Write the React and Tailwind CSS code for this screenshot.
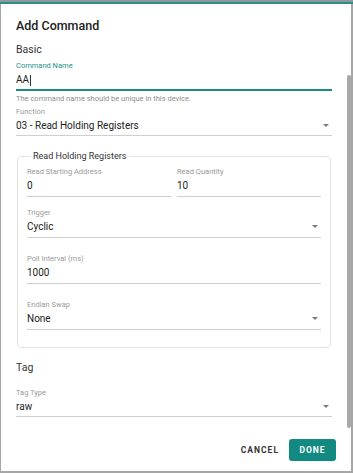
import React from "react";

const Arrow = () => (
  <svg width="6" height="3" viewBox="0 0 6 3" className="shrink-0">
    <path d="M0 0h6L3 3z" fill="#7a7a7a" />
  </svg>
);

function Field({ label, value, select, focused, tight, className = "" }) {
  return (
    <div className={className}>
      <div
        className={`h-[12px] leading-[12px] text-[7.5px] ${
          focused ? "text-[#1b9189]" : "text-[#9a9a9a]"
        }`}
      >
        {label}
      </div>
      <div
        className={`flex items-start justify-between leading-[16px] text-[10px] text-[#222] ${
          tight ? "h-[17px]" : "h-[18px]"
        }`}
      >
        <span className="flex items-center">
          {value}
          {focused && <span className="ml-[1px] w-[1px] h-[11px] bg-[#333]" />}
        </span>
        {select && (
          <span className="pt-[6px] pr-[3px]">
            <Arrow />
          </span>
        )}
      </div>
      <div className={focused ? "h-[2px] bg-[#1a8a84]" : "h-[1px] bg-[#cfcfcf]"} />
    </div>
  );
}

export default function App() {
  return (
    <div className="w-[353px] h-[473px] bg-[#a6a6a6] font-[Roboto,sans-serif] overflow-hidden flex flex-col">
      <div className="h-[2px] bg-[#8e9998]" />
      <div className="h-[2px] bg-[#2a8f89]" />
      <div className="relative ml-[1px] w-[350px] h-[467px] bg-white pl-[15px] pr-[19px] pt-[12px]">
        <div className="h-[20px] leading-[20px] text-[12.5px] font-medium text-[#212121]">
          Add Command
        </div>
        <div className="mt-[5px] h-[18px] leading-[18px] text-[10.5px] text-[#333]">Basic</div>

        <Field className="mt-[1px]" label="Command Name" value="AA" focused tight />
        <div className="mt-[2px] h-[12px] leading-[12px] text-[7.5px] text-[#8f8f8f]">
          The command name should be unique in this device.
        </div>
        <Field className="mt-[1px]" label="Function" value="03 - Read Holding Registers" select tight />

        <fieldset className="mt-[13px] mx-[1px] border border-[#e3e3e3] rounded-[4px] pl-[9px] pr-[9px] pt-[3px] pb-[17px]">
          <legend className="ml-[3px] px-[3px] h-[14px] leading-[14px] text-[9px] text-[#333]">
            Read Holding Registers
          </legend>
          <div className="grid grid-cols-2 gap-[6px]">
            <Field label="Read Starting Address" value="0" />
            <Field label="Read Quantity" value="10" />
          </div>
          <Field className="mt-[10px]" label="Trigger" value="Cyclic" select />
          <Field className="mt-[15px]" label="Poll Interval (ms)" value="1000" />
          <Field className="mt-[15px]" label="Endian Swap" value="None" select />
        </fieldset>

        <div className="mt-[11px] h-[18px] leading-[18px] text-[10.5px] text-[#333]">Tag</div>
        <Field className="mt-[10px]" label="Tag Type" value="raw" select tight />

        <div className="mt-[22px] -mr-[4px] flex items-center justify-end gap-[10px]">
          <button className="text-[8.5px] font-bold tracking-[1px] text-[#333] leading-[22px]">
            CANCEL
          </button>
          <button className="w-[47px] h-[22px] rounded-[3px] bg-[#138a81] text-white text-[8.5px] font-bold tracking-[1px]">
            DONE
          </button>
        </div>

        <div className="absolute right-0 top-[71px] w-[4px] h-[353px] rounded-[2px] bg-[#a9a9a9]" />
      </div>
    </div>
  );
}
